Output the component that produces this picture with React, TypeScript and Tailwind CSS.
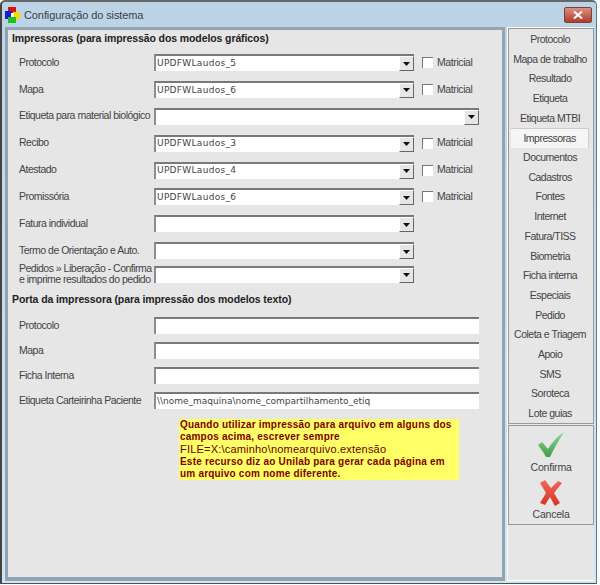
const FONT = "font-['Liberation_Sans',sans-serif]"

const GRAPHIC_ROWS: { label: string; value?: string; wide?: boolean; matricial?: boolean }[] = [
  { label: "Protocolo", value: "UPDFWLaudos_5", matricial: true },
  { label: "Mapa", value: "UPDFWLaudos_6", matricial: true },
  { label: "Etiqueta para material biológico", wide: true },
  { label: "Recibo", value: "UPDFWLaudos_3", matricial: true },
  { label: "Atestado", value: "UPDFWLaudos_4", matricial: true },
  { label: "Promissória", value: "UPDFWLaudos_6", matricial: true },
  { label: "Fatura individual" },
  { label: "Termo de Orientação e Auto." },
]

const TEXT_ROWS = [
  { label: "Protocolo", value: "" },
  { label: "Mapa", value: "" },
  { label: "Ficha Interna", value: "" },
  { label: "Etiqueta Carteirinha Paciente", value: "\\\\nome_maquina\\nome_compartilhamento_etiq" },
]

const TABS = [
  "Protocolo", "Mapa de trabalho", "Resultado", "Etiqueta", "Etiqueta MTBI", "Impressoras",
  "Documentos", "Cadastros", "Fontes", "Internet", "Fatura/TISS", "Biometria", "Ficha interna",
  "Especiais", "Pedido", "Coleta e Triagem", "Apoio", "SMS", "Soroteca", "Lote guias",
]

function Combo({ value, wide }: { value?: string; wide?: boolean }) {
  return (
    <div className={`flex h-[17px] items-center justify-between border-t-2 border-l-2 border-t-[#77797c] border-l-[#8b8d90] bg-white ${wide ? "w-[325px]" : "w-[260px]"}`}>
      <span className="pl-[1px] font-['DejaVu_Sans',sans-serif] text-[9px] tracking-[0.3px] text-[#444]">{value}</span>
      <span className="flex h-[15px] w-[15px] items-center justify-center border-t border-l border-r border-b border-t-white border-l-white border-r-[#666] border-b-[#666] bg-[#e6e6e6]">
        <svg width="7" height="4" viewBox="0 0 7 4"><path d="M0 0h7L3.5 4z" fill="#111" /></svg>
      </span>
    </div>
  )
}

function Matricial() {
  return (
    <div className="ml-[8px] flex items-center gap-[4px]">
      <span className="h-[11px] w-[11px] border-t border-l border-t-[#777] border-l-[#777] bg-white" />
      <span className="text-[10.5px] tracking-[-0.4px] text-[#444]">Matricial</span>
    </div>
  )
}

function Check() {
  return (
    <svg width="28" height="26" viewBox="0 0 28 26" className="blur-[0.5px]">
      <defs>
        <linearGradient id="chk" x1="0" y1="0" x2="0" y2="1">
          <stop offset="0" stopColor="#8fd78f" />
          <stop offset="1" stopColor="#3f9f4a" />
        </linearGradient>
      </defs>
      <path d="M1 13 L5 10 L11 17 C15 10 21 4 27 0 C23 7 17 16 13 25 L9 25 C7 21 4 17 1 13Z" fill="url(#chk)" />
    </svg>
  )
}

function Cross() {
  return (
    <svg width="24" height="26" viewBox="0 0 24 26" className="blur-[0.5px]">
      <defs>
        <linearGradient id="crs" x1="0" y1="0" x2="0" y2="1">
          <stop offset="0" stopColor="#ef6a5c" />
          <stop offset="1" stopColor="#d8321f" />
        </linearGradient>
      </defs>
      <path d="M1 3 L6 0 L12 8 L19 1 L23 3 L15 13 L21 23 L16 26 L11 17 L6 25 L1 23 L7 13Z" fill="url(#crs)" />
    </svg>
  )
}

export default function App() {
  return (
    <div className={`${FONT} flex h-[585px] w-[600px] flex-col overflow-hidden bg-[#fafdfd] text-[#444]`}>
      <div className="mr-[3px] flex h-[584px] flex-col rounded-t-[5px] border-t-2 border-r border-b border-l-2 border-t-[#666] border-r-[#5d7a8d] border-b-[#3c5566] border-l-[#444] bg-gradient-to-b from-[#bcd3e6] to-[#d3e5f1]">
        {/* title bar */}
        <div className="flex h-[25px] shrink-0 items-center pl-[3px] pr-[4px]">
          <svg width="16" height="16" viewBox="0 0 16 16" className="mr-[3px]">
            <rect x="3" y="0" width="8" height="7" fill="#e01010" />
            <rect x="0" y="4" width="7" height="8" fill="#1020d0" />
            <rect x="8" y="5" width="7" height="7" fill="#f0e000" />
            <rect x="3" y="10" width="8" height="6" fill="#20c020" />
            <rect x="6" y="6" width="3" height="4" fill="#fff" />
          </svg>
          <span className="pt-[1px] text-[11px] tracking-[-0.1px] text-[#3b3f44]">Configuração do sistema</span>
          <span className="ml-auto flex h-[16px] w-[28px] items-center justify-center rounded-[2px] border border-[#70453d] bg-gradient-to-b from-[#d98f80] to-[#b03a28]">
            <svg width="10" height="8" viewBox="0 0 10 8"><path d="M1 0.5 L9 7.5 M9 0.5 L1 7.5" stroke="#fff" strokeWidth="2" /></svg>
          </span>
        </div>

        <div className="flex min-h-0 flex-1 gap-[2px] pl-[3px] pr-[2px] pb-[2px]">
          {/* main panel */}
          <div className="w-[501px] border-t-[3px] border-r-[3px] border-b-[4px] border-l-[3px] border-[#92a3b1] bg-[#e6e6e6] pl-[4px]">
            <h2 className="mt-[2px] text-[10.5px] leading-[13px] font-bold tracking-[-0.1px] text-[#222]">
              Impressoras (para impressão dos modelos gráficos)
            </h2>
            <div className="mt-[9px] flex flex-col gap-[9.9px]">
              {GRAPHIC_ROWS.map((row) => (
                <div key={row.label} className="flex items-center pl-[7px]">
                  <span className="w-[135px] shrink-0 text-[10.5px] tracking-[-0.5px] whitespace-nowrap">{row.label}</span>
                  <Combo value={row.value} wide={row.wide} />
                  {row.matricial && <Matricial />}
                </div>
              ))}
              <div className="-mt-[6px] flex items-center pl-[7px]">
                <span className="w-[135px] shrink-0 text-[10.5px] leading-[11px] tracking-[-0.5px] whitespace-nowrap">
                  Pedidos » Liberação - Confirma
                  <br />e imprime resultados do pedido
                </span>
                <Combo />
              </div>
            </div>

            <h2 className="mt-[8px] text-[10.5px] leading-[13px] font-bold tracking-[-0.1px] text-[#222]">
              Porta da impressora (para impressão dos modelos texto)
            </h2>
            <div className="mt-[11px] flex flex-col gap-[8px]">
              {TEXT_ROWS.map((row) => (
                <div key={row.label} className="flex items-center pl-[7px]">
                  <span className="w-[135px] shrink-0 text-[10.5px] tracking-[-0.5px] whitespace-nowrap">{row.label}</span>
                  <div className="flex h-[17px] w-[325px] items-center border-t-2 border-l-2 border-t-[#77797c] border-l-[#8b8d90] bg-white pl-[1px] font-['DejaVu_Sans',sans-serif] text-[9px] whitespace-nowrap">
                    {row.value}
                  </div>
                </div>
              ))}
            </div>

            <div className="mt-[10px] ml-[167px] h-[61px] w-[280px] bg-[#ffff66] pl-[1px] text-[10px] leading-[12px] font-bold tracking-[0.2px] whitespace-nowrap text-[#800000]">
              Quando utilizar impressão para arquivo em alguns dos
              <br />campos acima, escrever sempre
              <br /><span className="text-[11px] font-normal text-[#660000]">FILE=X:\caminho\nomearquivo.extensão</span>
              <br />Este recurso diz ao Unilab para gerar cada página em
              <br />um arquivo com nome diferente.
            </div>
          </div>

          {/* right column */}
          <div className="flex w-[87px] flex-col border-t border-b border-l border-[#fff] bg-[#e6e6e6]">
            <div className="flex h-[396px] shrink-0 flex-col border border-[#999] pt-[1px] pr-[4px] pl-[2px]">
              {TABS.map((tab) => (
                <div
                  key={tab}
                  className={`flex h-[19.7px] shrink-0 items-center justify-center text-[10.5px] tracking-[-0.5px] whitespace-nowrap ${tab === "Impressoras" ? "border-t border-r border-[#ccc] bg-[#f5f5f5]" : ""}`}
                >
                  {tab}
                </div>
              ))}
            </div>
            <div className="mt-[1px] flex h-[100px] shrink-0 flex-col items-center border border-[#999] pt-[6px] text-[10.5px] tracking-[-0.2px]">
              <Check />
              <span className="mt-[3px] leading-[13px]">Confirma</span>
              <div className="mt-[6px]"><Cross /></div>
              <span className="mt-[2px] leading-[13px]">Cancela</span>
            </div>
          </div>
        </div>
      </div>
    </div>
  )
}
